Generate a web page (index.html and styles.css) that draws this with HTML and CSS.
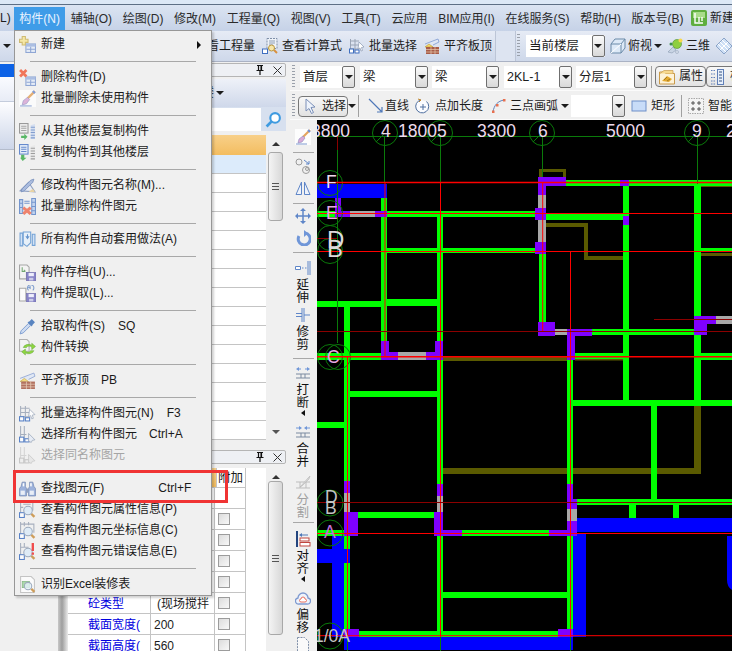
FILE: index.html
```html
<!DOCTYPE html>
<html lang="zh">
<head>
<meta charset="utf-8">
<title>构件菜单</title>
<link rel="stylesheet" href="styles.css">
</head>
<body>
<svg class="defs" aria-hidden="true">
  <symbol id="tbl" viewBox="0 0 16 16"><rect x="6.5" y="7.5" width="9" height="8" fill="#e4ecf8" stroke="#7f9ad0"/><rect x="6.5" y="7.5" width="9" height="2.5" fill="#9fb6e0"/><path d="M11 10v5M7 12.5h8" stroke="#7f9ad0"/></symbol>
  <symbol id="i-new" viewBox="0 0 16 16"><use href="#tbl"/><path d="M3 .5h3v2.5h2.500v3H6v2.500H3V6H.5V3H3z" fill="#f7e79a" stroke="#c9b25e"/></symbol>
  <symbol id="i-del" viewBox="0 0 16 16"><use href="#tbl"/><path d="M1 1l6 6M7 1L1 7" stroke="#f2603f" stroke-width="2.600"/></symbol>
  <symbol id="i-brush" viewBox="0 0 16 16"><rect width="16" height="16" fill="#fdfdfd"/><path d="M15 1L8 8" stroke="#e4a45e" stroke-width="2.200"/><path d="M13 1l2 2" stroke="#6c8fd8" stroke-width="2"/><path d="M8 7l2 2-3 4-4 1 1-4z" fill="#d9a9d6" stroke="#8a8ac0" stroke-width=".6"/><path d="M1 15h11" stroke="#7f9ad0"/></symbol>
  <symbol id="i-cf" viewBox="0 0 16 16"><rect x=".5" y=".5" width="8" height="9" fill="#eee" stroke="#8a8a8a"/><path d="M2 3h5M2 5h5M2 7h5" stroke="#999"/><path d="M2 12h3v-2l3 3-3 3v-2H2z" fill="#3fae4f"/><path d="M11 2l4-1v14h-4z" fill="#cfdcf2"/><path d="M11 4h4M11 6.500h4M11 9h4M11 11.500h4M11 14h4" stroke="#6f8fc8"/></symbol>
  <symbol id="i-ct" viewBox="0 0 16 16"><rect x=".5" y=".5" width="8" height="9" fill="#e3ecfa" stroke="#4f79c8"/><path d="M2 3h5M2 5h5M2 7h5" stroke="#4f79c8"/><path d="M2 10h3v3h2l-3.500 3L1 13h1z" fill="#3fae4f"/><path d="M11 2l4-1v14h-4z" fill="#e8e8e8"/><path d="M11 4h4M11 6.500h4M11 9h4M11 11.500h4M11 14h4" stroke="#8f8f8f"/></symbol>
  <symbol id="i-edit" viewBox="0 0 16 16"><path d="M1 13L9 5l6 9z" fill="#e8edf6" stroke="#7a8fb8"/><path d="M3 11l8-8 3-1-1 3-8 8-3 1z" fill="#9fb4dc" stroke="#5a78b0" stroke-width=".7"/><path d="M9 14h6l-2-3z" fill="#e8cf96"/></symbol>
  <symbol id="i-delall" viewBox="0 0 16 16"><path d="M.5 1.500h3v13h-3zM12 .5h3.500v15H12z" fill="#bcd0ee" stroke="#5f86c8"/><path d="M.5 5h3M.5 9h3M12 4h3.500M12 8h3.500M12 12h3.500M5 3h5M5 5h5" stroke="#5f86c8"/><path d="M4 9l7 6M11 9l-7 6" stroke="#ef7157" stroke-width="2.800"/></symbol>
  <symbol id="i-auto" viewBox="0 0 16 16"><path d="M1 2h2.500v12H1zM12.500 3H15v10.500h-2.500z" fill="#cfe0f6" stroke="#5f96d2"/><path d="M4 1h7v10l-3.500 3.500L4 12z" fill="#e6f0fb" stroke="#5f96d2"/><path d="M6 5h1.500V3h1v2H10l-2 3z" fill="#4f86c8"/></symbol>
  <symbol id="flop" viewBox="0 0 16 16"><rect x="7" y="8" width="9" height="8" fill="#7672c2" stroke="#5a56a0" stroke-width=".6"/><rect x="9" y="8.500" width="5" height="3" fill="#eef"/><rect x="9.500" y="13" width="4" height="2.500" fill="#c8c8e8"/></symbol>
  <symbol id="i-save" viewBox="0 0 16 16"><path d="M.5 1h7l2 2v5H7v6H.5z" fill="#f4f4f4" stroke="#9a9a9a"/><path d="M3 3v4h3M6 7L4.500 5.500" stroke="#5c9a5c" fill="none"/><use href="#flop"/></symbol>
  <symbol id="i-load" viewBox="0 0 16 16"><path d="M.5 3h6v12H.5z" fill="#fdfdfd" stroke="#9a9a9a"/><use href="#flop"/><path d="M9 5a3 3 0 1 1 4 0" stroke="#6a8fc8" fill="none"/><path d="M8 2l3-1v3z" fill="#6a8fc8"/></symbol>
  <symbol id="i-drop" viewBox="0 0 16 16"><path d="M1 15l1-3 7-7 2 2-7 7z" fill="#c8d8f2" stroke="#5f86c8" stroke-width=".8"/><path d="M8 4l4 4 1-2 2-2-3-3-2 2z" fill="#3f72b8"/></symbol>
  <symbol id="i-conv" viewBox="0 0 16 16"><path d="M.5 .5h7l2 2v9h-9z" fill="#f4f4f4" stroke="#a5a5a5"/><path d="M4 8a5 4 0 0 1 8-2V4l3.500 3L12 10V8a3 3 0 0 0-5 0z" fill="#7ed321" stroke="#4f9a1c" stroke-width=".5"/><path d="M14 11a5 4 0 0 1-8 2v2l-3.500-3L6 9.500V11a3 3 0 0 0 5 0z" fill="#7ed321" stroke="#4f9a1c" stroke-width=".5"/></symbol>
  <symbol id="i-flat" viewBox="0 0 16 16"><path d="M1 6L14 1l1 3-6 3" fill="#dfe7f5" stroke="#7f9ad0" stroke-width=".8"/><path d="M1 9l4-3 4 3z" fill="#f5d66a" stroke="#b99a30" stroke-width=".6"/><rect x="2" y="9" width="13" height="7" fill="#a85c48"/><path d="M2 11.500h13M2 14h13M7 9v7M11 9v7" stroke="#e6c8b0" stroke-width=".7"/></symbol>
  <symbol id="i-batch" viewBox="0 0 16 16"><path d="M1.500 1v14M6 1v14M1 3h9M1 7h9M1 11h9" stroke="#9aa4b5"/><rect x=".5" y="11" width="4" height="4" fill="#fff" stroke="#3f6fc0"/><rect x="6" y="12" width="4" height="3" fill="#fff" stroke="#3f6fc0"/><path d="M10 4l5 5-2.500.5 1 3-1.500.5-1-3L9 11z" fill="#fff" stroke="#8a98b0" stroke-width=".7"/></symbol>
  <symbol id="i-selall" viewBox="0 0 16 16"><path d="M1.500 0v15M5 0v15M1 8h6" stroke="#9aa4b5"/><rect x=".5" y="10.500" width="4" height="4.500" fill="#fff" stroke="#3f6fc0"/><rect x="5.500" y="12" width="4" height="3" fill="#fff" stroke="#3f6fc0"/><path d="M9 7l6 6-2.500.5-1 2L9 14z" fill="#e6ecf6" stroke="#8a98b0" stroke-width=".7"/></symbol>
  <symbol id="i-selname" viewBox="0 0 16 16"><path d="M1.500 0v15M5 0v15M1 8h6" stroke="#cfcfcf"/><rect x=".5" y="10.500" width="4" height="4.500" fill="#eee" stroke="#bfbfbf"/><rect x="5.500" y="12" width="4" height="3" fill="#eee" stroke="#bfbfbf"/><path d="M9 7l6 6-2.500.5-1 2L9 14z" fill="#e6e6e6" stroke="#c0c0c0" stroke-width=".7"/></symbol>
  <symbol id="i-find" viewBox="0 0 16 16"><path d="M3 2h3v4l1 2v7H.5V8L2 6zM10 2h3l1 4 1.500 2v7H9V8l1-2z" fill="#8fa8d8" stroke="#5f78a8" stroke-width=".7"/><path d="M7 8h2v4H7z" fill="#7f93b8"/><rect x="3.500" y="3" width="1.500" height="3" fill="#fff"/><rect x="10.500" y="3" width="1.500" height="3" fill="#fff"/><rect x="1.500" y="10" width="4" height="4" fill="#e8eef8"/><rect x="10" y="10" width="4" height="4" fill="#e8eef8"/></symbol>
  <symbol id="mag" viewBox="0 0 16 16"><rect x=".5" y="11" width="4.500" height="4.500" fill="#fff" stroke="#3f6fc0"/><path d="M11.500 12l3 3" stroke="#c98f3f" stroke-width="2.200"/><circle cx="8.500" cy="9" r="4" fill="#dcebf8" stroke="#8f9fb5"/></symbol>
  <symbol id="i-prop" viewBox="0 0 16 16"><path d="M1.500 0v11M1 1h12v8M4 3h7M1 6h3" stroke="#9aa4b5" fill="none"/><use href="#mag"/></symbol>
  <symbol id="i-coord" viewBox="0 0 16 16"><path d="M1.500 0v11M5 0v4M9 0v3M1 2h13v8" stroke="#9aa4b5" fill="none"/><use href="#mag"/></symbol>
  <symbol id="i-err" viewBox="0 0 16 16"><path d="M1.500 0v11M5 0v4M1 4h8" stroke="#9aa4b5" fill="none"/><use href="#mag"/><path d="M13 0v7.500M13 9v2" stroke="#f03030" stroke-width="2.200"/></symbol>
  <symbol id="i-xls" viewBox="0 0 16 16"><path d="M1.500 .5h10l3 3v12h-13z" fill="#fdfdfd" stroke="#bdbdbd"/><rect x="3" y="5" width="7" height="6" fill="#9fd49f" stroke="#6aa86a" stroke-width=".6"/><path d="M11.500 12l3 3" stroke="#c98f3f" stroke-width="2.200"/><circle cx="8.500" cy="9.500" r="3.500" fill="#e4f2fb" fill-opacity=".8" stroke="#8f9fb5"/></symbol>
  <symbol id="i-calc" viewBox="0 0 16 16"><path d="M5 .5h10v10H5z" fill="#eef2f8" stroke="#7f8fa8" stroke-dasharray="2 1"/><path d="M7 3h6M7 5h6M7 7h4" stroke="#8f9fb5"/><rect x=".5" y="11" width="5" height="4.500" fill="#fff" stroke="#3f6fc0"/><path d="M12 12l3 3" stroke="#d8903f" stroke-width="2"/><circle cx="9.500" cy="10" r="3" fill="#f7e6a8" stroke="#b9973f"/></symbol>
  <symbol id="i-cube" viewBox="0 0 16 16"><path d="M1 6l4-5h10v9l-4 5H1z" fill="#dce9f7" stroke="#6a8aa8"/><path d="M1 6h10v9M11 6l4-5" fill="none" stroke="#6a8aa8"/><path d="M1 15l10-9" stroke="#fff"/></symbol>
  <symbol id="i-3d" viewBox="0 0 16 16"><path d="M1 14l5-5 3 3-4 3z" fill="#c8d4e4" stroke="#8a9ab0" stroke-width=".6"/><circle cx="10" cy="6" r="4.500" fill="#8ecf3f" stroke="#4f8f2f" stroke-width=".6"/><circle cx="13.500" cy="2.500" r="2" fill="#f7d84f"/><circle cx="4" cy="6" r="1.500" fill="#3f8f4f"/><circle cx="10" cy="14" r="1.500" fill="#d8e0ec" stroke="#8a9ab0" stroke-width=".5"/></symbol>
  <symbol id="i-iso" viewBox="0 0 16 16"><path d="M8 0l8 8-8 8-8-8z" fill="#cfe0f6" stroke="#8aa4c8"/><path d="M4 4l8 8M12 4l-8 8M6 2l8 8M2 6l8 8" stroke="#fff"/></symbol>
  <symbol id="i-attr" viewBox="0 0 16 16"><path d="M.5 3h5l1 1.500h9v10.500H.5z" fill="#fdf2d8" stroke="#c99a4a"/><path d="M1 4.500l4-3h9v3" fill="#f7d98f" stroke="#c99a4a" stroke-width=".7"/><path d="M3 12l5-5 5 3-3 3z" fill="#e3a92f"/><path d="M5 11l3-3M8 12l3-2" stroke="#8a6418" stroke-width=".7"/></symbol>
  <symbol id="i-list" viewBox="0 0 16 16"><path d="M1 1.500h4M1 5h4M1 8.500h4M1 12h4M1 15h4" stroke="#5f7fb8" stroke-dasharray="1.500 1"/><rect x="7.500" y=".5" width="6" height="15" fill="#e6eefa" stroke="#5f7fb8"/><path d="M9 3h3M9 6h3M9 9h3M9 12h3" stroke="#35507f"/></symbol>
  <symbol id="i-cursor" viewBox="0 0 16 16"><path d="M3 1l9 8-4 .5 2.500 5-2 1-2.500-5L3 13z" fill="#eef3fb" stroke="#7a8fb8"/></symbol>
  <symbol id="i-line" viewBox="0 0 16 16"><path d="M1 1l13 13M9 14h5V9" fill="none" stroke="#4f78b8" stroke-width="1.200"/></symbol>
  <symbol id="i-addlen" viewBox="0 0 16 16"><path d="M11.500 3.500A6.500 6.500 0 1 1 6 2" fill="#fbfcff" stroke="#4f6f9f"/><path d="M3 1l3 1-2 2" fill="none" stroke="#c0872f"/><path d="M8 6v6M5 9h6" stroke="#4f6f9f"/></symbol>
  <symbol id="i-arc" viewBox="0 0 16 16"><path d="M2 14C3 7 7 3 13 2" fill="none" stroke="#5f7fb8"/><rect x="1" y="12.500" width="2.500" height="2.500" fill="#e8704f"/><rect x="5" y="6" width="2.500" height="2.500" fill="#e8704f"/><rect x="12" y="1" width="2.500" height="2.500" fill="#e8704f"/></symbol>
  <symbol id="i-rect" viewBox="0 0 16 16"><rect x="1" y="3" width="14" height="10" fill="#c8dcf8" stroke="#6f8fc8"/></symbol>
  <symbol id="i-smart" viewBox="0 0 16 16"><rect x=".5" y=".5" width="15" height="15" fill="#f4f4f4" stroke="#a8a8a8" stroke-dasharray="1.500 1"/><path d="M5 3v4M3 5h4M11 3v4M9 5h4M5 9v4M3 11h4M11 9v4M9 11h4" stroke="#333" stroke-width=".8"/></symbol>
  <symbol id="i-logo" viewBox="0 0 16 16"><rect width="16" height="16" rx="2" fill="#5fae3f"/><rect x="2" y="2" width="12" height="6" fill="#a8dc8a"/><path d="M4 3v10h8M8 7v5M11 7v4" fill="none" stroke="#fff" stroke-width="1.400"/></symbol>
  <symbol id="i-pin" viewBox="0 0 8 10"><path d="M1 .5h6M2.500 1v4.500h3V1M.5 5.500h7M4 6v4" fill="none" stroke="#111" stroke-width="1.200"/><rect x="4.500" y="1" width="1.200" height="4.500" fill="#111"/></symbol>
  <symbol id="i-x" viewBox="0 0 9 9"><path d="M.5 .5l8 8M8.500 .5l-8 8" stroke="#333"/></symbol>
  <symbol id="v-circ" viewBox="0 0 16 16"><circle cx="4" cy="4" r="3" fill="none" stroke="#9a9a9a"/><circle cx="11" cy="12" r="3.500" fill="none" stroke="#9a9a9a"/><path d="M9 2l5 4M14 3v3h-3" fill="none" stroke="#5f86c8"/><circle cx="12" cy="11" r="1.500" fill="none" stroke="#9a9a9a"/></symbol>
  <symbol id="v-mirror" viewBox="0 0 16 16"><path d="M6.500 2L1 14.500h5.500zM9.500 2L15 14.500H9.500z" fill="#eef3fb" stroke="#5f86c8"/></symbol>
  <symbol id="v-move" viewBox="0 0 16 16"><path d="M8 1v14M1 8h14" stroke="#5f86c8" stroke-width="1.500"/><path d="M8 0l3 3H5zM8 16l3-3H5zM0 8l3-3v6zM16 8l-3-3v6z" fill="#5f86c8"/></symbol>
  <symbol id="v-rot" viewBox="0 0 16 16"><path d="M10 3a6 6 0 1 1-6 3" fill="none" stroke="#6f96d8" stroke-width="3"/><path d="M9 0v7l4-3.500z" fill="#6f96d8"/></symbol>
  <symbol id="v-ext" viewBox="0 0 16 16"><path d="M.5 6.500h5v3h-5z" fill="#fff" stroke="#5f86c8"/><path d="M7 8h5" stroke="#5f86c8" stroke-dasharray="1.500 1.500"/><path d="M13 1v14M15 1v14" stroke="#5f86c8"/></symbol>
  <symbol id="v-trim" viewBox="0 0 16 16"><path d="M1 6.500h6M1 9.500h6M9 8h6" stroke="#5f86c8"/><path d="M7 1v14M9 1v14" stroke="#5f86c8"/></symbol>
  <symbol id="v-break" viewBox="0 0 16 16"><path d="M1 4l3-2v1.500h2v1H4V6zM15 4l-3-2v1.500h-2v1h2V6z" fill="#6f96d8"/><path d="M1 9h14M1 13h14M6 9v4M10 9v4" stroke="#7a8aa0"/></symbol>
  <symbol id="v-merge" viewBox="0 0 16 16"><path d="M7 4L4 2v1.500H1v1h3V6zM9 4l3-2v1.500h3v1h-3V6z" fill="#6f96d8"/><path d="M1 9h14M1 13h14M6 9v4M10 9v4" stroke="#7a8aa0"/></symbol>
  <symbol id="v-split" viewBox="0 0 16 16"><path d="M1 7h14M1 13h14M5 7v6M11 7v6" stroke="#bdbdbd"/><path d="M6 11L13 3l2-2-1 3-7 7-2 1z" fill="#d8d8d8" stroke="#b5b5b5" stroke-width=".6"/></symbol>
  <symbol id="v-align" viewBox="0 0 16 16"><path d="M2 0v16" stroke="#23457f" stroke-width="2"/><rect x="5" y="7" width="9" height="3" fill="#fff" stroke="#c0463f"/><rect x="5" y="11.500" width="10" height="3.500" fill="#fff" stroke="#c0463f"/><path d="M4 4l3-2v1.500h6v1H7V6z" fill="#4f78b8"/></symbol>
  <symbol id="v-cloud" viewBox="0 0 16 16"><path d="M4 14a3 3 0 0 1-1-6 5 5 0 0 1 10 0 3 3 0 0 1-1 6z" fill="#eef3fb" stroke="#7f9ad0" stroke-width="1.300"/><path d="M6 12a1.500 1.500 0 0 1 0-3 2 2 0 0 1 4 0 1.500 1.500 0 0 1 0 3z" fill="#fff" stroke="#e8705f"/></symbol>
  <symbol id="v-doc" viewBox="0 0 16 16"><path d="M2.500 .5h7l4 4v11h-11z" fill="#fafafa" stroke="#7f8fa8" stroke-dasharray="2 1"/></symbol>
</svg>

<div class="app">
  <div class="titlebar"></div>

  <nav class="menubar">
    <span class="mb-clip">L)</span>
    <span class="mb-item mb-on">构件(N)</span>
    <span class="mb-item">辅轴(O)</span>
    <span class="mb-item">绘图(D)</span>
    <span class="mb-item">修改(M)</span>
    <span class="mb-item">工程量(Q)</span>
    <span class="mb-item">视图(V)</span>
    <span class="mb-item">工具(T)</span>
    <span class="mb-item">云应用</span>
    <span class="mb-item">BIM应用(I)</span>
    <span class="mb-item">在线服务(S)</span>
    <span class="mb-item">帮助(H)</span>
    <span class="mb-item">版本号(B)</span>
    <svg class="ic mb-logo"><use href="#i-logo"/></svg>
    <span class="mb-new">新建</span>
  </nav>

  <div class="tb1">
    <span class="caret tb1-caret"></span>
    <span class="vsep"></span>
    <div class="tb1-tools">
      <span class="tool"><svg class="ic"><use href="#i-calc"/></svg>查看工程量</span>
      <span class="tool"><svg class="ic"><use href="#i-calc"/></svg>查看计算式</span>
      <span class="tool"><svg class="ic"><use href="#i-batch"/></svg>批量选择</span>
      <span class="tool"><svg class="ic"><use href="#i-flat"/></svg>平齐板顶</span>
    </div>
    <span class="tb1-gap"></span>
    <span class="grip"></span>
    <span class="sel sel-floor"><span class="sel-text">当前楼层</span><span class="sel-btn"><i class="caret"></i></span></span>
    <span class="tool tool-view"><svg class="ic"><use href="#i-cube"/></svg>俯视<i class="caret"></i></span>
    <span class="tool tool-3d"><svg class="ic"><use href="#i-3d"/></svg>三维</span>
    <svg class="ic tool-iso"><use href="#i-iso"/></svg>
  </div>

  <div class="work">
    <aside class="side">
      <div class="nav">
        <div class="nav-on"></div>
        <div class="nav-row"></div>
        <div class="nav-tail"></div>
      </div>
      <div class="panels">
        <div class="ptitle"><svg class="pin"><use href="#i-pin"/></svg><svg class="px"><use href="#i-x"/></svg></div>
        <div class="pband"><span class="pband-text">楼</span><i class="caret"></i></div>
        <div class="psearch">
          <span class="psearch-box"></span>
          <svg class="ic psearch-ic" viewBox="0 0 16 16"><circle cx="9.500" cy="6.500" r="4.500" fill="#fff" stroke="#3f9be0" stroke-width="2"/><path d="M6 10l-4.500 4.500" stroke="#3f9be0" stroke-width="2.600"/></svg>
        </div>
        <div class="list">
          <div class="list-body">
            <div class="list-head"></div>
            <div class="list-sel"></div>
            <div class="list-row"></div><div class="list-row"></div><div class="list-row"></div><div class="list-row"></div><div class="list-row"></div>
            <div class="list-row"></div><div class="list-row"></div><div class="list-row"></div><div class="list-row"></div><div class="list-row"></div>
            <div class="list-row"></div><div class="list-row"></div><div class="list-row"></div><div class="list-row"></div>
          </div>
          <div class="sb sb-top">
            <i class="sb-up"></i>
            <span class="sb-thumb"><b></b></span>
            <i class="sb-down"></i>
          </div>
        </div>
        <div class="ptitle ptitle-2"><svg class="pin"><use href="#i-pin"/></svg><svg class="px"><use href="#i-x"/></svg></div>
        <div class="attrs">
          <div class="split"></div>
          <div class="attr-table">
            <div class="attr-head"><span class="ah-fill"></span><span class="ah-cell">附加</span></div>
            <div class="attr-row"><span class="a-name"></span><span class="a-val"></span><span class="a-chk"></span></div>
            <div class="attr-row"><span class="a-name"></span><span class="a-val"></span><span class="a-chk"><i class="cb"></i></span></div>
            <div class="attr-row"><span class="a-name"></span><span class="a-val"></span><span class="a-chk"><i class="cb"></i></span></div>
            <div class="attr-row"><span class="a-name"></span><span class="a-val"></span><span class="a-chk"><i class="cb"></i></span></div>
            <div class="attr-row"><span class="a-name"></span><span class="a-val"></span><span class="a-chk"><i class="cb"></i></span></div>
            <div class="attr-row"><span class="a-name">砼类型</span><span class="a-val a-ind">(现场搅拌</span><span class="a-chk"><i class="cb"></i></span></div>
            <div class="attr-row"><span class="a-name">截面宽度(</span><span class="a-val">200</span><span class="a-chk"><i class="cb"></i></span></div>
            <div class="attr-row"><span class="a-name">截面高度(</span><span class="a-val">560</span><span class="a-chk"><i class="cb"></i></span></div>
          </div>
          <div class="attr-blank"></div>
          <div class="sb sb-bottom">
            <i class="sb-up"></i>
            <span class="sb-thumb"><b></b></span>
          </div>
        </div>
      </div>
    </aside>

    <div class="main">
      <div class="tb2">
        <span class="grip"></span>
        <span class="sel sel-a"><span class="sel-text">首层</span><span class="sel-btn"><i class="caret"></i></span></span>
        <span class="sel sel-b"><span class="sel-text">梁</span><span class="sel-btn"><i class="caret"></i></span></span>
        <span class="sel sel-c"><span class="sel-text">梁</span><span class="sel-btn"><i class="caret"></i></span></span>
        <span class="sel sel-d"><span class="sel-text">2KL-1</span><span class="sel-btn"><i class="caret"></i></span></span>
        <span class="sel sel-e"><span class="sel-text">分层1</span><span class="sel-btn"><i class="caret"></i></span></span>
        <span class="vsep2"></span>
        <span class="tbtn tbtn-attr"><svg class="ic"><use href="#i-attr"/></svg>属性</span>
        <span class="tbtn tbtn-list"><svg class="ic"><use href="#i-list"/></svg>构件列表</span>
      </div>
      <div class="tb3">
        <span class="grip"></span>
        <span class="tbtn tbtn-sel"><svg class="ic"><use href="#i-cursor"/></svg>选择</span>
        <i class="caret"></i>
        <span class="vsep2 vsep-s"></span>
        <span class="tool t-line"><svg class="ic"><use href="#i-line"/></svg>直线</span>
        <span class="tool t-add"><svg class="ic"><use href="#i-addlen"/></svg>点加长度</span>
        <span class="tool t-arc"><svg class="ic"><use href="#i-arc"/></svg>三点画弧<i class="caret"></i></span>
        <span class="sel sel-f"><span class="sel-text"></span><span class="sel-btn"><i class="caret"></i></span></span>
        <span class="tool t-rect"><svg class="ic"><use href="#i-rect"/></svg>矩形</span>
        <span class="vsep2 vsep-r"></span>
        <span class="tool t-smart"><svg class="ic"><use href="#i-smart"/></svg>智能</span>
      </div>

      <div class="stage">
        <div class="vtool">
          <svg class="ic"><use href="#i-brush"/></svg>
          <span class="vt-sep vt-s1"></span>
          <svg class="ic"><use href="#v-circ"/></svg>
          <svg class="ic vt-m6"><use href="#v-mirror"/></svg>
          <span class="vt-sep vt-s2"></span>
          <svg class="ic"><use href="#v-move"/></svg>
          <svg class="ic vt-m6"><use href="#v-rot"/></svg>
          <span class="vt-sep vt-s3"></span>
          <div class="vt-btn"><svg class="ic"><use href="#v-ext"/></svg><span>延伸</span></div>
          <div class="vt-btn vt-m2"><svg class="ic"><use href="#v-trim"/></svg><span>修剪</span></div>
          <span class="vt-sep vt-s4"></span>
          <div class="vt-btn"><svg class="ic"><use href="#v-break"/></svg><span>打断</span></div>
          <i class="vt-tri"></i>
          <div class="vt-btn vt-m8"><svg class="ic"><use href="#v-merge"/></svg><span>合并</span></div>
          <div class="vt-btn vt-m6 vt-dim"><svg class="ic"><use href="#v-split"/></svg><span>分割</span></div>
          <span class="vt-sep vt-s5"></span>
          <div class="vt-btn"><svg class="ic"><use href="#v-align"/></svg><span>对齐</span></div>
          <i class="vt-tri"></i>
          <div class="vt-btn vt-m8"><svg class="ic"><use href="#v-cloud"/></svg><span>偏移</span></div>
          <svg class="ic vt-m2"><use href="#v-doc"/></svg>
        </div>

        <svg class="canvas" viewBox="317 120 415 531" role="img" aria-label="结构平面图">
          <rect x="317" y="120" width="415" height="531" fill="#000"/>
          <g class="olive">
            <path class="oline" d="M540.500 177v-6.500h24V177"/>
            <rect x="546" y="223" width="41" height="4"/><rect x="584" y="223" width="4" height="37"/><rect x="584" y="256" width="39" height="4"/>
            <rect x="701" y="184" width="31" height="3"/><rect x="701" y="253" width="31" height="3"/>
            <rect x="443" y="356" width="124" height="5"/>
            <rect x="443" y="468" width="258" height="6"/><rect x="694" y="406" width="7" height="68"/>
            <rect x="575" y="359" width="48" height="1.500"/>
          </g>
          <g class="green">
            <rect x="317" y="211" width="218" height="6"/><rect x="546" y="214" width="77" height="6"/>
            <rect x="566" y="180" width="166" height="6"/>
            <rect x="623" y="186" width="6" height="214"/><rect x="694" y="186" width="7" height="220"/>
            <rect x="381" y="198" width="6" height="143"/><rect x="437" y="217" width="6" height="124"/>
            <rect x="387" y="248" width="148" height="5"/><rect x="701" y="248" width="31" height="4"/>
            <rect x="387" y="299" width="50" height="7"/><rect x="317" y="301" width="64" height="6"/>
            <rect x="344" y="306" width="6" height="175"/>
            <rect x="539" y="253" width="7" height="69"/>
            <rect x="592" y="329" width="102" height="6"/>
            <rect x="317" y="353" width="64" height="7"/><rect x="575" y="353" width="48" height="6"/><rect x="701" y="353" width="31" height="7"/>
            <rect x="567" y="360" width="6" height="124"/>
            <rect x="437" y="360" width="6" height="124"/>
            <rect x="350" y="391" width="87" height="6"/><rect x="317" y="422" width="27" height="6"/>
            <rect x="573" y="400" width="159" height="6"/>
            <rect x="651" y="406" width="6" height="93"/>
            <rect x="577" y="499" width="155" height="6"/>
            <rect x="629" y="505" width="7" height="13"/><rect x="673" y="505" width="6" height="13"/>
            <rect x="358" y="512" width="76" height="6"/>
            <rect x="462" y="530" width="87" height="6"/><rect x="317" y="530" width="27" height="6"/>
            <rect x="344" y="536" width="6" height="13"/><rect x="344" y="563" width="6" height="68"/>
            <rect x="437" y="536" width="6" height="95"/><rect x="567" y="536" width="6" height="95"/>
            <rect x="443" y="592" width="124" height="6"/>
            <rect x="359" y="631" width="199" height="6"/>
          </g>
          <g class="blue">
            <rect x="317" y="184" width="70" height="14"/>
            <rect x="577" y="518" width="155" height="14"/>
            <rect x="573" y="533" width="13" height="104"/>
            <path d="M727 536h5v54q-5-3-5-10z"/>
            <rect x="332" y="536" width="12" height="101"/><rect x="317" y="549" width="33" height="14"/>
            <rect x="344" y="637" width="229" height="13"/>
          </g>
          <g class="purple">
            <rect x="538" y="177" width="28" height="9"/><rect x="538" y="186" width="8" height="9"/>
            <rect x="535" y="208" width="11" height="12"/><rect x="535" y="242" width="11" height="12"/>
            <rect x="335" y="198" width="6" height="19"/><rect x="341" y="211" width="9" height="6"/><rect x="375" y="211" width="12" height="6"/>
            <rect x="620" y="180" width="9" height="6"/><rect x="623" y="216" width="6" height="9"/>
            <rect x="538" y="322" width="17" height="14"/><rect x="567" y="329" width="25" height="7"/><rect x="567" y="329" width="8" height="31"/>
            <rect x="694" y="316" width="22" height="8"/><rect x="694" y="324" width="13" height="11"/>
            <rect x="381" y="341" width="8" height="19"/><rect x="381" y="352" width="17" height="8"/>
            <rect x="426" y="352" width="17" height="8"/><rect x="435" y="341" width="8" height="19"/>
            <rect x="344" y="481" width="6" height="12"/><rect x="344" y="512" width="14" height="24"/>
            <rect x="437" y="484" width="6" height="12"/><rect x="434" y="512" width="9" height="24"/><rect x="443" y="530" width="19" height="6"/>
            <rect x="567" y="484" width="6" height="15"/><rect x="567" y="499" width="10" height="10"/><rect x="567" y="521" width="10" height="15"/><rect x="549" y="530" width="28" height="6"/>
            <rect x="344" y="629" width="15" height="8"/><rect x="558" y="629" width="15" height="8"/>
          </g>
          <g class="gray">
            <rect x="538" y="195" width="8" height="13"/><rect x="538" y="220" width="8" height="22"/>
            <rect x="350" y="211" width="25" height="6"/><rect x="555" y="329" width="12" height="6"/>
            <rect x="716" y="316" width="16" height="8"/><rect x="398" y="352" width="28" height="8"/>
            <rect x="344" y="493" width="6" height="19"/><rect x="437" y="496" width="6" height="16"/><rect x="567" y="509" width="10" height="12"/>
          </g>
          <g class="axis">
            <path d="M317 136.500h415M384.500 136v46M440.500 136v46M542.500 136v41M697.500 136v48M337.500 150v193M347.500 637v14M440.500 637v14M570.500 637v14"/>
            <g class="circles">
              <circle cx="385" cy="133" r="12.500"/><circle cx="440" cy="133" r="12.500"/><circle cx="542" cy="133" r="12.500"/><circle cx="697" cy="133" r="12.500"/>
              <circle cx="330" cy="183" r="12.500"/><circle cx="330" cy="213" r="12.500"/><circle cx="330" cy="238" r="12.500"/><circle cx="330" cy="251" r="12.500"/>
              <circle cx="330" cy="357" r="12.500"/><circle cx="338" cy="357" r="12.500"/>
              <circle cx="330" cy="503" r="13"/><circle cx="330" cy="533" r="13"/><circle cx="330" cy="636" r="13"/>
            </g>
            <path d="M385 133l-9 9M440 133l-9 9M542 133l-9 9M697 133l-9 9"/>
          </g>
          <g class="red">
            <path class="r2" d="M317 182.500h415M317 356.700h415"/>
            <path d="M317 213.500h415M317 251.500h415M317 533.500h415M317 635.700h415"/>
            <path d="M385 182v175M440.500 182v455M542.700 182v149M570.500 251v386M347.500 357v280"/>
          </g>
          <path class="dred" d="M317 331.500h415M654 319.500h78M317 238.500h20M317 502.500h415M337.500 136v14"/>
          <g class="lbl">
            <text x="311" y="137">3800</text><text x="381" y="137">4</text><text x="398" y="137">18005</text><text x="477" y="137">3300</text>
            <text x="538" y="137">6</text><text x="606" y="137">5000</text><text x="692" y="137">9</text><text x="726" y="137">2</text>
            <text x="326" y="188">F</text><text class="pk" x="326" y="219">E</text>
            <text class="lg" x="327" y="248">D</text><text class="lg" x="327" y="257">B</text>
            <text class="pk" x="327" y="363">C</text>
            <text class="gy" x="325" y="503">D</text><text class="gy" x="325" y="514">B</text>
            <text class="mg" x="324" y="538">A</text>
            <text class="gy" x="314" y="642">1/0A</text>
          </g>
        </svg>
      </div>
    </div>
  </div>
</div>

<div class="menu">
  <div class="mi"><svg class="ic"><use href="#i-new"/></svg>新建<i class="mi-arrow"></i></div>
  <div class="ms"></div>
  <div class="mi"><svg class="ic"><use href="#i-del"/></svg>删除构件(D)</div>
  <div class="mi"><svg class="ic"><use href="#i-brush"/></svg>批量删除未使用构件</div>
  <div class="ms"></div>
  <div class="mi"><svg class="ic"><use href="#i-cf"/></svg>从其他楼层复制构件</div>
  <div class="mi"><svg class="ic"><use href="#i-ct"/></svg>复制构件到其他楼层</div>
  <div class="ms"></div>
  <div class="mi"><svg class="ic"><use href="#i-edit"/></svg>修改构件图元名称(M)...</div>
  <div class="mi"><svg class="ic"><use href="#i-delall"/></svg>批量删除构件图元</div>
  <div class="ms"></div>
  <div class="mi"><svg class="ic"><use href="#i-auto"/></svg>所有构件自动套用做法(A)</div>
  <div class="ms"></div>
  <div class="mi"><svg class="ic"><use href="#i-save"/></svg>构件存档(U)...</div>
  <div class="mi"><svg class="ic"><use href="#i-load"/></svg>构件提取(L)...</div>
  <div class="ms"></div>
  <div class="mi"><svg class="ic"><use href="#i-drop"/></svg>拾取构件(S)<span class="key k-sq">SQ</span></div>
  <div class="mi"><svg class="ic"><use href="#i-conv"/></svg>构件转换</div>
  <div class="ms"></div>
  <div class="mi"><svg class="ic"><use href="#i-flat"/></svg>平齐板顶<span class="key k-pb">PB</span></div>
  <div class="ms"></div>
  <div class="mi"><svg class="ic"><use href="#i-batch"/></svg>批量选择构件图元(N)<span class="key k-f3">F3</span></div>
  <div class="mi"><svg class="ic"><use href="#i-selall"/></svg>选择所有构件图元<span class="key k-ca">Ctrl+A</span></div>
  <div class="mi mi-off"><svg class="ic"><use href="#i-selname"/></svg>选择同名称图元</div>
  <div class="ms"></div>
  <div class="mi"><svg class="ic"><use href="#i-find"/></svg>查找图元(F)<span class="key k-cf">Ctrl+F</span></div>
  <div class="mi"><svg class="ic"><use href="#i-prop"/></svg>查看构件图元属性信息(P)</div>
  <div class="mi"><svg class="ic"><use href="#i-coord"/></svg>查看构件图元坐标信息(C)</div>
  <div class="mi"><svg class="ic"><use href="#i-err"/></svg>查看构件图元错误信息(E)</div>
  <div class="ms"></div>
  <div class="mi"><svg class="ic"><use href="#i-xls"/></svg>识别Excel装修表</div>
</div>
<div class="annot"></div>
</body>
</html>
```
FILE: styles.css
```css
* { box-sizing: border-box; }
html, body { margin: 0; padding: 0; }
body {
  width: 732px; height: 651px; overflow: hidden; position: relative;
  font: 12px/1.2 "Liberation Sans", "Noto Sans CJK SC", sans-serif;
  color: #1c1c1c; background: #f0f0f0;
}
.defs { position: absolute; width: 0; height: 0; }
.ic { width: 16px; height: 16px; flex: none; display: block; }
i { display: block; font-style: normal; }

.app { display: flex; flex-direction: column; width: 732px; height: 651px; }

.titlebar { height: 5px; background: #dce8f6; border-bottom: 1px solid #5d6f85; }

.menubar {
  height: 26px; display: flex; align-items: center; flex: none; white-space: nowrap; overflow: hidden;
  background: linear-gradient(#dbe4f2, #c6d2e7);
}
.mb-clip { width: 14px; flex: none; }
.mb-item { padding: 0 5.350px; height: 24px; line-height: 24px; margin-top: 2px; color: #2a2a2a; flex: none; }
.mb-on { background: #3f9ce8; color: #e9f3ff; }
.mb-logo { margin-left: 2px; }
.mb-new { margin-left: 3px; }

.tb1 {
  height: 31px; flex: none; display: flex; align-items: center; white-space: nowrap; overflow: hidden;
  background: linear-gradient(#e6ebf5, #ced8ea); border-bottom: 1px solid #aab2c4;
}
.caret { width: 0; height: 0; border: 4px solid transparent; border-top: 4px solid #1c1c1c; border-bottom: 0; flex: none; }
.tb1-caret { margin-left: 3px; }
.vsep { width: 1px; height: 26px; background: #b4bccc; margin-left: 4px; }
.tb1-tools { display: flex; gap: 7px; margin-left: 159px; }
.tool { display: flex; align-items: center; gap: 4px; flex: none; }
.tb1-gap { flex: none; width: 21px; height: 31px; margin-left: 3px; background: #dde4f1; border-left: 1px solid #bcc5d6; border-right: 1px solid #bcc5d6; }
.grip { width: 3px; flex: none; height: 24px; margin: 0 6px 0 1px; background: repeating-linear-gradient(#9aa0aa 0 1px, transparent 1px 3px); }
.sel { display: flex; height: 22px; background: #fff; flex: none; }
.sel-text { flex: 1; line-height: 22px; padding-left: 3px; font-size: 12.500px; overflow: hidden; white-space: nowrap; }
.sel-btn {
  width: 13px; flex: none; display: flex; align-items: center; justify-content: center;
  border: 1px solid #6f6f6f; border-radius: 2px; background: linear-gradient(#fafafa, #d9d9d9);
}
.sel-floor { width: 79px; }
.tool-view { margin-left: 5px; gap: 2px; }
.tool-3d { margin-left: 5px; gap: 3px; }
.tool-iso { margin-left: 6px; }

.work { flex: 1; display: flex; min-height: 0; }

.side { width: 290px; flex: none; display: flex; background: #f0f0f0; }
.nav { width: 58px; flex: none; padding-top: 2px; }
.nav-on { height: 13px; background: #0c62e6; }
.nav-row { height: 25px; background: linear-gradient(#fafbff, #e8ecf6); border-bottom: 1px solid #c4ccdc; }
.nav-tail { height: 48px; background: linear-gradient(#fdfdff, #cdd6e9); border-bottom: 1px solid #b4bccc; }

.panels { width: 232px; flex: none; padding-top: 1px; }
.ptitle {
  width: 228px; height: 14px; border: 1px solid #b5b5b5; border-radius: 2px; background: #eef0f4;
  display: flex; align-items: center; justify-content: flex-end; gap: 9px; padding-right: 3px;
}
.ptitle-2 { margin-top: 10px; }
.pin { width: 8px; height: 10px; flex: none; display: block; }
.px { width: 9px; height: 9px; flex: none; display: block; }
.pband {
  width: 228px; height: 28px; margin-top: 2px; display: flex; align-items: center; justify-content: flex-end;
  padding-right: 62px; gap: 2px; background: linear-gradient(#eef1f8, #cfd8ea);
}
.psearch { width: 228px; height: 24px; display: flex; align-items: center; background: #d7e0ef; }
.psearch-box { width: 203px; height: 23px; background: #fff; }
.psearch-ic { margin-left: 4px; width: 17px; height: 17px; }
.list { display: flex; height: 305px; margin-top: 4px; width: 228px; gap: 2px; }
.list-body { width: 208px; flex: none; background: #fff; }
.list-head { height: 20px; background: linear-gradient(#f8d089, #f3bd60); }
.list-sel { height: 19px; background: #dcebfb; border-bottom: 1px solid #c4c4c4; }
.list-row { height: 19px; border-bottom: 1px solid #c4c4c4; }
.sb { width: 15px; flex: none; background: #f0f0f0; display: flex; flex-direction: column; align-items: center; position: relative; }
.sb-top { height: 305px; }
.sb-up { width: 0; height: 0; margin-top: 7px; border: 4px solid transparent; border-bottom: 4px solid #333; border-top: 0; }
.sb-down { width: 0; height: 0; margin-top: auto; margin-bottom: 6px; border: 4px solid transparent; border-top: 4px solid #555; border-bottom: 0; }
.sb-thumb {
  margin-top: 6px; width: 15px; height: 69px; border: 1px solid #a8a8a8; border-radius: 3px;
  background: linear-gradient(90deg, #f4f4f4, #d8d8d8); display: flex; align-items: center; justify-content: center;
}
.sb-thumb b { width: 7px; height: 7px; background: repeating-linear-gradient(#555 0 1px, transparent 1px 3px); }
.attrs { display: flex; margin-top: 4px; height: 183px; overflow: hidden; }
.split { width: 10px; flex: none; background: linear-gradient(90deg, #c8c8c8, #9e9e9e 40%, #ececec); }
.attr-table { width: 178px; flex: none; background: #fff; }
.attr-head { height: 20px; display: flex; border-bottom: 1px solid #c4c4c4; }
.ah-fill { width: 148px; background: linear-gradient(#f8d089, #f3bd60); }
.ah-cell { flex: 1; padding-left: 1px; line-height: 20px; font-size: 12.500px; border-right: 1px solid #c4c4c4; border-left: 1px solid #c4c4c4; }
.attr-row { height: 21px; display: grid; grid-template-columns: 83px 64px 31px; border-bottom: 1px solid #c4c4c4; }
.a-name { padding: 1px 0 0 20px; color: #0000e0; line-height: 20px; overflow: hidden; white-space: nowrap; border-right: 1px solid #c4c4c4; }
.a-val { padding: 1px 0 0 3px; line-height: 20px; overflow: hidden; white-space: nowrap; border-right: 1px solid #c4c4c4; }
.a-ind { padding-left: 6px; }
.a-chk { display: flex; align-items: center; justify-content: flex-start; padding-left: 3px; border-right: 1px solid #c4c4c4; }
.cb { width: 12px; height: 12px; border: 1px solid #9c9c9c; background: linear-gradient(135deg, #dcdcdc, #f8f8f8); }
.attr-blank { width: 20px; flex: none; background: #fff; }
.sb-bottom { margin-left: 2px; height: 183px; }
.sb-bottom .sb-thumb { height: 154px; margin-top: 2px; }

.main { flex: 1; min-width: 0; display: flex; flex-direction: column; }
.tb2, .tb3 { height: 29px; flex: none; display: flex; align-items: center; white-space: nowrap; overflow: hidden; background: #f0f0f0; border-bottom: 1px solid #fbfbfb; }
.tb2 { padding-top: 1px; }
.tb3 { padding-top: 2px; }
.tb2 .grip, .tb3 .grip { margin: 0 5px 0 2px; }
.sel-a { width: 55px; }
.sel-b { width: 68px; margin-left: 5px; }
.sel-c { width: 67px; margin-left: 4px; }
.sel-d { width: 68px; margin-left: 5px; }
.sel-e { width: 71px; margin-left: 4px; }
.vsep2 { width: 1px; height: 22px; background: #a0a0a0; margin-left: 4px; flex: none; }
.tbtn {
  display: flex; align-items: center; gap: 4px; height: 21px; flex: none;
  border: 1px solid #777; border-radius: 4px; background: linear-gradient(#f8f8f8, #e2e2e2); padding: 0 3px;
}
.tbtn-attr { width: 51px; margin-left: 3px; }
.tbtn-list { width: 70px; }
.tb3 .grip { margin-right: 3px; }
.tbtn-sel { width: 50px; padding-left: 4px; gap: 3px; }
.vsep-s { margin-left: 2px; }
.t-line { margin-left: 9px; gap: 1px; }
.t-add { margin-left: 6px; }
.t-arc { margin-left: 8px; gap: 3px; }
.sel-f { width: 54px; margin-left: 2px; }
.t-rect { margin-left: 6px; }
.vsep-r { margin-left: 6px; }
.t-smart { margin-left: 6px; }

.stage { flex: 1; display: flex; min-height: 0; }
.vtool { width: 27px; flex: none; display: flex; flex-direction: column; align-items: center; padding: 9px 1px 0 0; overflow: hidden; background: #f0f0f0; }
.vt-sep { width: 21px; height: 1px; flex: none; background: #a8a8a8; }
.vt-s1 { margin: 7px 0 5px; }
.vt-s2 { margin: 7px 0 4px; }
.vt-s3 { margin: 6px 0 7px; }
.vt-s4 { margin: 6px 0; }
.vt-s5 { margin: 2px 0 8px; }
.vt-btn { display: flex; flex-direction: column; align-items: center; gap: 3px; flex: none; }
.vt-btn span { width: 13px; font-size: 12.500px; line-height: 13px; word-break: break-all; color: #111; }
.vt-dim span { color: #a0a0a0; }
.vt-m2 { margin-top: 2px; }
.vt-m6 { margin-top: 6px; }
.vt-m8 { margin-top: 8px; }
.vt-tri { width: 0; height: 0; flex: none; border: 3px solid transparent; border-right: 4px solid #111; border-left: 0; }

.canvas { width: 415px; height: 531px; flex: none; display: block; }
.olive { fill: #5a5a00; }
.oline { fill: none; stroke: #5a5a00; stroke-width: 3; }
.green { fill: #00ff00; }
.blue { fill: #0000ff; }
.purple { fill: #7f00ff; }
.gray { fill: #a8a8a8; }
.axis { stroke: #0a7a0a; fill: none; }
.red { stroke: #ff0000; fill: none; }
.r2 { stroke-width: 1.500; }
.dred { stroke: #8b0000; fill: none; }
.lbl { fill: #eedcee; font: 17.500px "Liberation Sans", sans-serif; }
.lbl .pk { fill: #e8a8e4; }
.lbl .lg { font-size: 24px; fill: #dcdcdc; }
.lbl .gy { fill: #c4c4c4; }
.lbl .mg { fill: #c070d8; }

.menu {
  position: absolute; left: 14px; top: 30px; width: 198px; padding: 3px 1px 0; background: #f0f0f0;
  border: 1px solid #979797; box-shadow: 2px 2px 2px rgba(0,0,0,.18);
}
.mi { height: 21px; display: flex; align-items: center; padding-left: 3px; white-space: nowrap; position: relative; color: #1a1a1a; }
.mi .ic { width: 17px; height: 17px; margin-right: 5px; opacity: .85; }
.mi-off { color: #a5a5a5; }
.ms { height: 12px; margin: 0 14px; display: flex; align-items: center; }
.ms::before { content: ""; display: block; width: 100%; height: 1px; background: #a8a8a8; }
.mi-arrow { position: absolute; right: 9px; top: 7px; width: 0; height: 0; border: 4px solid transparent; border-left: 4px solid #111; border-right: 0; }
.key { display: block; }
.k-sq { margin-left: 13px; }
.k-pb { margin-left: 12px; }
.k-f3 { margin-left: 13px; }
.k-ca { margin-left: 12px; }
.k-cf { margin-left: 54px; }

.annot { position: absolute; left: 13px; top: 470px; width: 215px; height: 33px; border: 3px solid #f03434; }
```
